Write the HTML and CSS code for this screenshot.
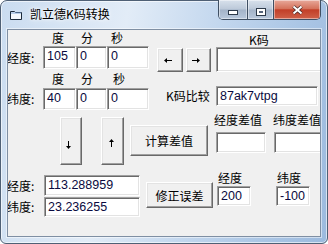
FILE: index.html
```html
<!DOCTYPE html>
<html lang="zh-CN">
<head>
    <meta charset="UTF-8">
    <title>凯立德K码转换</title>
    <link rel="stylesheet" href="styles.css">
</head>
<body>
    <div class="window">
        <div class="titlebar">
            <svg class="app-icon" width="12" height="10" viewBox="0 0 12 10">
                <path d="M0.5 1.5H4.5L5.5 2.5H11.5V9.5H0.5Z" fill="#f4f8fc" stroke="#1d2b3b"/>
                <path d="M1 3H11" stroke="#7ea4d4"/>
            </svg>
            <span class="title">凯立德K码转换</span>
            <div class="caption-buttons">
                <div class="cap-btn cap-min"><span class="min-glyph"></span></div>
                <div class="cap-btn cap-max"><span class="max-glyph"></span></div>
                <div class="cap-btn cap-close">
                    <svg width="11" height="10" viewBox="0 0 11 10">
                        <path d="M1.5 1.5L9.5 8.5M9.5 1.5L1.5 8.5" stroke="#4a2a28" stroke-width="3.6"/>
                        <path d="M1.5 1.5L9.5 8.5M9.5 1.5L1.5 8.5" stroke="#fff" stroke-width="2"/>
                    </svg>
                </div>
            </div>
        </div>

        <div class="client">
            <div class="top-section">
                <div class="coords">
                    <span></span>
                    <span class="unit u-deg">度</span>
                    <span class="unit u-min">分</span>
                    <span class="unit u-sec">秒</span>

                    <span class="field-label">经度:</span>
                    <div class="textbox">105</div>
                    <div class="textbox">0</div>
                    <div class="textbox">0</div>

                    <span></span>
                    <span class="unit u-deg">度</span>
                    <span class="unit u-min">分</span>
                    <span class="unit u-sec2">秒</span>

                    <span class="field-label">纬度:</span>
                    <div class="textbox">40</div>
                    <div class="textbox">0</div>
                    <div class="textbox">0</div>
                </div>

                <div class="kcode">
                    <div class="kcode-title">K码</div>
                    <div class="kcode-row">
                        <button class="btn arrow-btn">
                            <svg width="8" height="5" viewBox="0 0 8 5"><path d="M2 2.5H8" stroke="#000"/><path d="M0 2.5L3 0V5Z" fill="#000"/></svg>
                        </button>
                        <button class="btn arrow-btn right-btn">
                            <svg width="8" height="5" viewBox="0 0 8 5"><path d="M0 2.5H6" stroke="#000"/><path d="M8 2.5L5 0V5Z" fill="#000"/></svg>
                        </button>
                        <div class="textbox kcode-box"></div>
                    </div>
                    <div class="compare-row">
                        <span class="compare-label">K码比较</span>
                        <div class="textbox compare-box">87ak7vtpg</div>
                    </div>
                </div>
            </div>

            <div class="middle-section">
                <button class="btn tall-btn down-btn">
                    <svg width="5" height="8" viewBox="0 0 5 8"><path d="M2.5 0V6" stroke="#000"/><path d="M2.5 8L0 5H5Z" fill="#000"/></svg>
                </button>
                <button class="btn tall-btn up-btn">
                    <svg width="5" height="8" viewBox="0 0 5 8"><path d="M2.5 2V8" stroke="#000"/><path d="M2.5 0L0 3H5Z" fill="#000"/></svg>
                </button>
                <button class="btn calc-btn">计算差值</button>
                <div class="diff-col">
                    <span class="small-label">经度差值</span>
                    <div class="textbox diff-box"></div>
                </div>
                <div class="diff-col diff-col2">
                    <span class="small-label">纬度差值</span>
                    <div class="textbox diff-box"></div>
                </div>
            </div>

            <div class="bottom-section">
                <div class="result-grid">
                    <span class="field-label">经度:</span>
                    <div class="textbox">113.288959</div>
                    <span class="field-label">纬度:</span>
                    <div class="textbox">23.236255</div>
                </div>
                <button class="btn fix-btn">修正误差</button>
                <div class="offset-col">
                    <span class="offset-label">经度</span>
                    <div class="textbox offset-box">200</div>
                </div>
                <div class="offset-col offset-col2">
                    <span class="offset-label">纬度</span>
                    <div class="textbox offset-box">-100</div>
                </div>
            </div>
        </div>
    </div>
</body>
</html>
```

FILE: styles.css
```css
body {
    margin: 0;
    font-family: "Noto Sans CJK SC", sans-serif;
    font-size: 12px;
    color: #000;
}
.window {
    width: 328px;
    height: 244px;
    box-sizing: border-box;
    border: 1px solid #4f6075;
    border-radius: 7px 7px 6px 6px;
    padding: 0 6px 6px;
    background: linear-gradient(100deg, #cadcf0 0%, #e2ecf7 35%, #c3d7ee 60%, #abc6e5 82%, #9cbade 100%);
    box-shadow: inset 0 0 0 1px rgba(255, 255, 255, 0.6);
    display: flex;
    flex-direction: column;
}
.titlebar {
    height: 28px;
    display: flex;
    align-items: flex-start;
    flex: none;
}
.app-icon {
    margin: 9px 0 0 3px;
}
.title {
    margin: 5px 0 0 8px;
    line-height: 16px;
    text-shadow: 0 0 6px #fff, 0 0 3px #fff;
}
.caption-buttons {
    margin-left: auto;
    margin-top: -1px;
    height: 20px;
    box-sizing: border-box;
    display: flex;
    border: 1px solid #3f4f63;
    border-top: none;
    border-radius: 0 0 5px 5px;
    overflow: hidden;
}
.cap-btn {
    height: 100%;
    display: flex;
    align-items: center;
    justify-content: center;
    box-shadow: inset 0 0 0 1px rgba(255, 255, 255, 0.45);
}
.cap-min, .cap-max {
    background: linear-gradient(#d8e1ec, #bcc9d9 48%, #a3b3c8 52%, #b8c8dc);
    border-right: 1px solid #3f4f63;
}
.cap-min {
    width: 28px;
}
.cap-max {
    width: 25px;
}
.cap-close {
    width: 46px;
    background: linear-gradient(#e8a99b, #d5735c 45%, #c23f28 52%, #cf6149);
}
.min-glyph {
    width: 8px;
    height: 3px;
    margin-top: 6px;
    background: #fff;
    border: 1px solid #2d3a4a;
}
.max-glyph {
    width: 8px;
    height: 6px;
    margin-top: 4px;
    background: #fff;
    border: 1px solid #2d3a4a;
    box-shadow: inset 0 0 0 2px #fff, inset 0 0 0 3px #56657a;
}
.cap-close svg {
    margin-top: 1px;
}

.client {
    flex: 1;
    background: #f0f0f0;
    border: 1px solid #7f8fa3;
    box-shadow: 0 0 0 1px rgba(255, 255, 255, 0.5);
    overflow: hidden;
}

.textbox {
    box-sizing: border-box;
    background: #fff;
    border: 1px solid;
    border-color: #a0a0a0 #fff #fff #a0a0a0;
    box-shadow: inset 1px 1px #696969, inset -1px -1px #e3e3e3;
    padding: 2px 2px 0 3px;
    font-family: "Liberation Sans", Arial, sans-serif;
    font-size: 12.5px;
    line-height: 15px;
    color: #0a0a40;
    white-space: nowrap;
    overflow: hidden;
    flex: none;
}
.btn {
    box-sizing: border-box;
    background: #f0f0f0;
    border: 1px solid;
    border-color: #fff #696969 #696969 #fff;
    box-shadow: inset -1px -1px #a0a0a0, inset 1px 1px #e3e3e3;
    padding: 0;
    font-family: "Noto Sans CJK SC", sans-serif;
    font-size: 12px;
    color: #000;
    display: flex;
    align-items: center;
    justify-content: center;
    flex: none;
}

/* top: coordinates entry + K code */
.top-section {
    display: flex;
}
.coords {
    display: grid;
    grid-template-columns: 35px 33px 31px 42px;
    grid-template-rows: 16px 23px 19px 22px;
    flex: none;
}
.unit {
    line-height: 16px;
    align-self: center;
}
.u-deg {
    padding-left: 9px;
}
.u-min {
    padding-left: 5px;
}
.u-sec {
    padding-left: 4px;
}
.u-sec2 {
    padding-left: 6px;
}
.field-label {
    line-height: 16px;
    align-self: center;
    margin-left: -1px;
}
.kcode {
    margin-left: 8px;
    display: flex;
    flex-direction: column;
    flex: none;
}
.kcode-title {
    line-height: 19px;
    margin-bottom: -2px;
    padding-left: 92px;
}
.kcode-row {
    display: flex;
    align-items: flex-start;
}
.arrow-btn {
    width: 26px;
    height: 24px;
    margin-top: 1px;
}
.arrow-btn svg {
    margin-right: 5px;
}
.right-btn {
    width: 25px;
    margin-left: 3px;
}
.kcode-box {
    margin-left: 5px;
    width: 110px;
    height: 25px;
}
.compare-row {
    display: flex;
    align-items: center;
    margin-top: 14px;
}
.compare-label {
    width: 50px;
    padding-left: 9px;
    line-height: 16px;
    flex: none;
}
.compare-box {
    width: 102px;
    height: 20px;
}

/* middle: shift buttons and difference */
.middle-section {
    display: flex;
    align-items: flex-start;
    margin-top: 5px;
}
.tall-btn {
    width: 22px;
    height: 48px;
    margin-top: 2px;
}
.down-btn {
    margin-left: 52px;
}
.down-btn svg {
    margin: 8px 6px 0 0;
}
.up-btn {
    width: 23px;
    margin-left: 19px;
}
.up-btn svg {
    margin: 4px 2px 0 0;
}
.calc-btn {
    width: 78px;
    height: 31px;
    margin: 10px 0 0 6px;
}
.diff-col {
    display: flex;
    flex-direction: column;
    margin: -3px 0 0 6px;
    flex: none;
}
.diff-col2 {
    margin-left: 7px;
}
.small-label {
    line-height: 16px;
    white-space: nowrap;
}
.diff-box {
    width: 50px;
    height: 21px;
    margin: 4px 0 0 2px;
}
.diff-col2 .diff-box {
    width: 52px;
    margin-left: 1px;
}

/* bottom: result and correction */
.bottom-section {
    display: flex;
    align-items: flex-start;
    margin-top: 4px;
}
.result-grid {
    display: grid;
    grid-template-columns: 36px 96px;
    grid-template-rows: 21px 20px;
    row-gap: 1px;
    margin-top: 6px;
    flex: none;
}
.fix-btn {
    width: 67px;
    height: 26px;
    margin: 13px 0 0 6px;
}
.offset-col {
    display: flex;
    flex-direction: column;
    margin-left: 4px;
    flex: none;
}
.offset-col2 {
    margin-left: 25px;
}
.offset-label {
    line-height: 17px;
    padding-left: 1px;
}
.offset-box {
    width: 34px;
    height: 20px;
}
```
